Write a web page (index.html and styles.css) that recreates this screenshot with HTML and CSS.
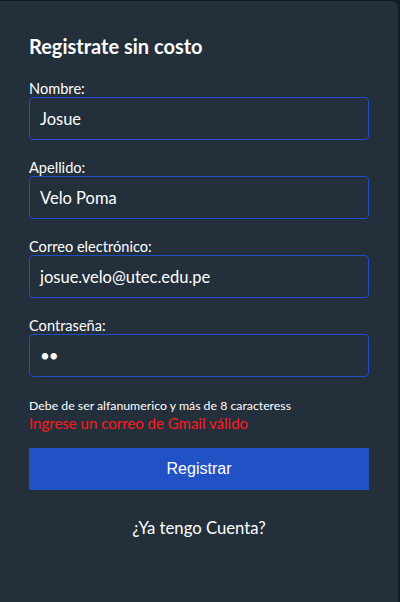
FILE: index.html
```html
<!DOCTYPE html>
<html lang="es">
<head>
<meta charset="utf-8">
<link rel="stylesheet" href="styles.css">
</head>
<body>
<div class="card">
  <h2 class="title">Registrate sin costo</h2>
  <form class="form">
    <div class="field">
      <label class="label">Nombre:</label>
      <div class="input">Josue</div>
    </div>
    <div class="field">
      <label class="label">Apellido:</label>
      <div class="input">Velo Poma</div>
    </div>
    <div class="field">
      <label class="label">Correo electrónico:</label>
      <div class="input">josue.velo@utec.edu.pe</div>
    </div>
    <div class="field">
      <label class="label">Contraseña:</label>
      <div class="input pass">••</div>
    </div>
    <p class="hint">Debe de ser alfanumerico y más de 8 caracteress</p>
    <p class="error">Ingrese un correo de Gmail válido</p>
    <div class="btn">Registrar</div>
    <p class="link">¿Ya tengo Cuenta?</p>
  </form>
</div>
</body>
</html>
```
FILE: styles.css
```css
html, body {
  margin: 0;
  padding: 0;
  background: #141a22;
  height: 602px;
  overflow: hidden;
}
.card {
  margin-top: 1px;
  width: 398px;
  height: 601px;
  background: #242f3c;
  border-radius: 0 6px 0 0;
  box-sizing: border-box;
  padding: 33px 29px 0 29px;
  font-family: Lato, "Open Sans", sans-serif;
  color: #ffffff;
}
.title {
  margin: 0;
  font-size: 20px;
  font-weight: 700;
  line-height: 25px;
}
.form {
  margin-top: 21px;
  display: flex;
  flex-direction: column;
}
.field {
  display: flex;
  flex-direction: column;
  margin-bottom: 19px;
}
.label {
  font-size: 14.6px;
  line-height: 17px;
}
.input {
  height: 43px;
  box-sizing: border-box;
  border: 1px solid #1e4ec4;
  border-radius: 4px;
  padding: 0 10px;
  font-size: 16.5px;
  display: flex;
  align-items: center;
}
.pass {
  font-size: 17px;
  letter-spacing: -1px;
}
.hint {
  margin: 2px 0 0;
  font-size: 12.3px;
  line-height: 15px;
}
.error {
  margin: 1px 0 0;
  font-size: 15px;
  line-height: 18px;
  color: #ff1a1a;
}
.btn {
  margin-top: 16px;
  height: 42px;
  background: #2052c5;
  display: flex;
  align-items: center;
  justify-content: center;
  font-family: "Liberation Sans", Arial, sans-serif;
  font-size: 16px;
}
.link {
  margin: 28px 0 0;
  text-align: center;
  font-size: 16.7px;
  line-height: 20px;
}
```
